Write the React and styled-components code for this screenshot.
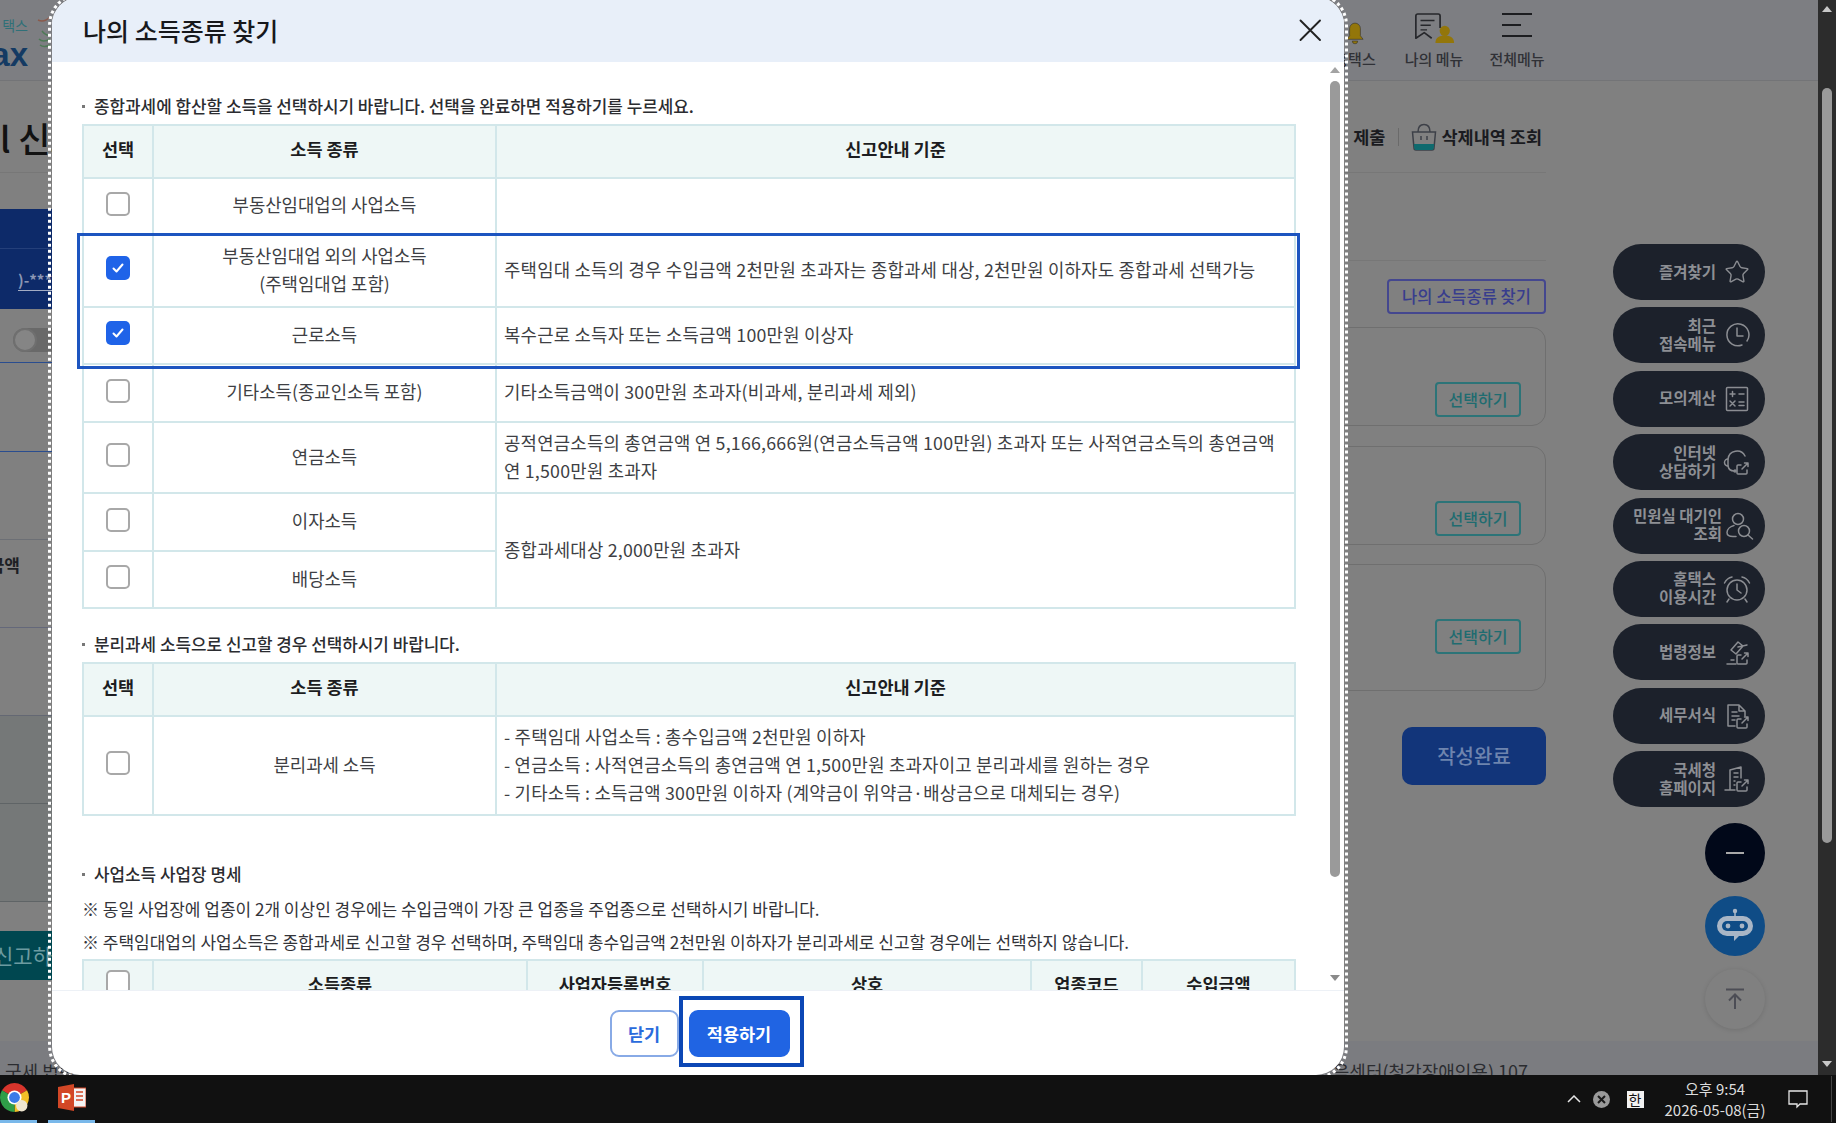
import React from 'react';
import styled, { createGlobalStyle } from 'styled-components';
import { Star } from 'lucide-react';

const GlobalStyle = createGlobalStyle`
	html, body {
		margin: 0;
		padding: 0;
		height: 100%;
		overflow: hidden;
		font-family: "Noto Sans CJK KR", "Noto Sans", sans-serif;
	}
	* {
		box-sizing: border-box;
	}
`;

const Screen = styled.div`
	width: 1836px;
	height: 1123px;
	display: flex;
	flex-direction: column;
	overflow: hidden;
`;

const Desktop = styled.div`
	height: 1075px;
	display: flex;
`;

const Page = styled.div`
	position: relative;
	flex: 1;
	display: flex;
	flex-direction: column;
	background: #808080;
	overflow: hidden;
`;

/* header behind the dimmed layer */
const TopBar = styled.header`
	height: 81px;
	flex: none;
	display: flex;
	justify-content: space-between;
	background: #7d7e82;
	border-bottom: 1px solid #737477;
	padding-right: 260px;
`;

const Brand = styled.div`
	display: flex;
	gap: 9px;
	padding-top: 15px;
`;

const BrandText = styled.div`
	width: 28px;
	display: flex;
	flex-direction: column;
	align-items: flex-end;
	overflow: hidden;
`;

const BrandSmall = styled.span`
	font-size: 14px;
	line-height: 20px;
	color: #2f7078;
`;

const BrandLarge = styled.span`
	margin-top: 5px;
	font-size: 33px;
	line-height: 30px;
	font-weight: 900;
	color: #143a63;
	font-family: "Liberation Sans", sans-serif;
`;

const TopNav = styled.nav`
	display: flex;
`;

const NavItem = styled.div`
	width: ${props => props.$w}px;
	display: flex;
	flex-direction: column;
	align-items: center;
	color: #2e2f33;
`;

const NavIcon = styled.div`
	height: 49px;
	display: flex;
	align-items: flex-start;
	padding-top: ${props => props.$top}px;
`;

const NavLabel = styled.span`
	font-size: 15px;
	line-height: 20px;
	font-weight: 500;
	white-space: nowrap;
	color: #303136;
`;

const PageBody = styled.div`
	flex: 1;
	display: grid;
	grid-template-columns: 52px 1291px 203px 67px 152px 53px;
	min-height: 0;
`;

const LeftSlice = styled.div`
	grid-column: 1;
	display: flex;
	flex-direction: column;
	overflow: hidden;
`;

const PageTitle = styled.div`
	height: 92px;
	flex: none;
	border-bottom: 1px solid #777;
	font-size: 35px;
	line-height: 44px;
	padding-top: 35px;
	white-space: nowrap;
	color: #121212;
	font-weight: 500;
`;

const NavyBand = styled.div`
	margin-top: 36px;
	height: 100px;
	flex: none;
	background: #0d2a69;
`;

const NavyHead = styled.div`
	height: 40px;
	border-bottom: 1px solid #243f7a;
`;

const MaskedNumber = styled.div`
	margin: 20px 0 0 18px;
	font-size: 15px;
	line-height: 21px;
	font-weight: 700;
	white-space: nowrap;
	color: #8c97b4;
	border-bottom: 1px solid #a4adc4;
`;

const ListRow = styled.div`
	height: ${props => props.$h}px;
	flex: none;
	border-bottom: 1px solid ${props => props.$line};
	background: ${props => props.$bg || 'transparent'};
	padding: ${props => props.$pad || '0'};
`;

const Toggle = styled.div`
	width: 60px;
	height: 24px;
	margin-left: 13px;
	border-radius: 12px;
	background: #696969;
`;

const ToggleKnob = styled.div`
	width: 24px;
	height: 24px;
	border-radius: 50%;
	background: #858585;
	border: 2px solid #6f6f6f;
`;

const RowLabel = styled.div`
	font-size: 17px;
	line-height: 24px;
	font-weight: 700;
	color: #1d1f24;
	width: 20px;
	overflow: hidden;
	direction: rtl;
	white-space: nowrap;
`;

const TealBand = styled.div`
	margin-top: 29px;
	height: 49px;
	flex: none;
	background: #004750;
	display: flex;
	justify-content: flex-end;
	font-size: 21px;
	line-height: 49px;
	color: #6c9ba0;
	white-space: nowrap;
	overflow: hidden;
`;

const RightSlice = styled.div`
	grid-column: 3;
	display: flex;
	flex-direction: column;
	align-items: flex-end;
`;

const ActionBar = styled.div`
	width: 100%;
	height: 92px;
	flex: none;
	display: flex;
	justify-content: flex-end;
	align-items: flex-end;
	padding-bottom: 21px;
	border-bottom: 1px solid #777;
`;

const ActionText = styled.span`
	font-size: 17.5px;
	line-height: 28px;
	font-weight: 700;
	color: #1a1b20;
	white-space: nowrap;
	margin-right: ${props => props.$mr || 0}px;
`;

const ActionDivider = styled.span`
	width: 1px;
	height: 18px;
	margin: 0 12px 5px 13px;
	background: #6a6a6a;
`;

const SectionLine = styled.div`
	width: 100%;
	margin-top: 87px;
	border-top: 1px solid #777;
`;

const FindButton = styled.div`
	width: 159px;
	height: 35px;
	margin-top: 18px;
	border: 2px solid #44478f;
	border-radius: 4px;
	font-size: 16.5px;
	line-height: 31px;
	font-weight: 500;
	text-align: center;
	color: #383d8d;
`;

const ChoiceCard = styled.div`
	width: 260px;
	height: ${props => props.$h}px;
	margin-top: ${props => props.$mt}px;
	flex: none;
	display: flex;
	justify-content: flex-end;
	align-items: flex-end;
	padding: 0 24px ${props => props.$pb}px 0;
	border: 1px solid #6f6f6f;
	border-radius: 14px;
`;

const ChoiceButton = styled.div`
	width: 86px;
	height: 35px;
	border: 2px solid #2c7478;
	border-radius: 4px;
	font-size: 16px;
	line-height: 31px;
	font-weight: 500;
	text-align: center;
	color: #1f6c70;
`;

const DoneButton = styled.div`
	width: 144px;
	height: 58px;
	margin-top: 36px;
	border-radius: 10px;
	background: #12357a;
	font-size: 20px;
	line-height: 58px;
	font-weight: 500;
	text-align: center;
	color: #6e84ae;
`;

const Rail = styled.aside`
	grid-column: 5;
	padding-top: 163px;
	display: flex;
	flex-direction: column;
	align-items: flex-end;
`;

const Pill = styled.div`
	width: 152px;
	height: 56px;
	flex: none;
	margin-bottom: 7.4px;
	display: flex;
	justify-content: flex-end;
	align-items: center;
	gap: 7px;
	padding-right: 14px;
	border-radius: 28px;
	background: #1c212b;
	color: #8b8d92;
`;

const PillText = styled.span`
	padding-bottom: 3px;
	font-size: 15.5px;
	line-height: 18px;
	font-weight: 700;
	text-align: right;
	white-space: pre-line;
	color: #8d8f94;
`;

const PillIcon = styled.span`
	width: ${props => props.$w || 28}px;
	height: 28px;
	flex: none;
	display: flex;
	align-items: center;
	justify-content: center;

	svg {
		flex: none;
	}
`;

const RoundButton = styled.div`
	width: 60px;
	height: 60px;
	flex: none;
	margin-top: ${props => props.$mt}px;
	border-radius: 50%;
	display: flex;
	align-items: center;
	justify-content: center;
	background: ${props => props.$bg};
	box-shadow: ${props => props.$ring ? '0 1px 5px rgba(0, 0, 0, 0.12)' : 'none'};
`;

const PageFooter = styled.footer`
	height: 34px;
	flex: none;
	display: flex;
	justify-content: space-between;
	padding: 17px 290px 0 5px;
	background: #7b7c80;
	font-size: 18px;
	line-height: 26px;
	color: #2b2c30;
	white-space: nowrap;
`;

/* the dialog */
const DottedFrame = styled.div`
	position: absolute;
	left: 48px;
	top: -7px;
	width: 1300px;
	height: 1086px;
	padding: 1px;
	border: 3px dotted #fff;
	border-radius: 32px;
`;

const Dialog = styled.div`
	height: 100%;
	display: flex;
	flex-direction: column;
	border-radius: 28px;
	background: #fff;
	overflow: hidden;
`;

const DialogHeader = styled.div`
	height: 65px;
	flex: none;
	display: flex;
	justify-content: space-between;
	align-items: center;
	padding: 0 22px 0 31px;
	background: #e8eff9;
`;

const DialogTitle = styled.h2`
	margin: 0;
	font-size: 25px;
	line-height: 34px;
	font-weight: 500;
	color: #17181c;
`;

const DialogBody = styled.div`
	position: relative;
	height: 928px;
	flex: none;
	padding: 32px 48px 0 30px;
	overflow: hidden;
`;

const SectionTitle = styled.div`
	margin: ${props => props.$mt || 0}px 0 6px;
	display: flex;
	align-items: center;
	gap: 9px;
	font-size: 16.9px;
	line-height: 24px;
	font-weight: 500;
	color: #2b2c30;

	&::before {
		content: '';
		width: 3px;
		height: 3px;
		background: #777;
	}
`;

const Note = styled.div`
	font-size: 17px;
	line-height: 33px;
	color: #33343a;
	white-space: nowrap;
`;

const TableWrap = styled.div`
	position: relative;
	width: 1212px;
	margin-top: ${props => props.$mt || 0}px;
`;

const Table = styled.table`
	width: 1212px;
	table-layout: fixed;
	border-collapse: collapse;
`;

const Col = styled.col`
	width: ${props => props.$w}px;
`;

const Tr = styled.tr`
	height: ${props => props.$h}px;
`;

const Th = styled.th`
	border: 2px solid #d2e7ea;
	background: #eef7f6;
	font-size: 17.5px;
	line-height: 24px;
	font-weight: 700;
	color: #1c1d21;
	padding: 0 0 5px;
`;

const Td = styled.td`
	border: 2px solid #d2e7ea;
	padding: 0 7px 4px;
	font-size: 17.8px;
	line-height: 28px;
	font-weight: 400;
	color: #3e3f44;
	text-align: ${props => props.$left ? 'left' : 'center'};
	letter-spacing: ${props => props.$left ? '0.22px' : '0'};
	white-space: nowrap;
`;

const Check = styled.span`
	display: inline-flex;
	vertical-align: middle;
	width: 24px;
	height: 24px;
	margin-bottom: 4px;
	align-items: center;
	justify-content: center;
	border-radius: 5px;
	border: ${props => props.$on ? 'none' : '2px solid #a8a8a8'};
	background: ${props => props.$on ? '#1f63e8' : '#fff'};
`;

const Highlight = styled.div`
	position: absolute;
	left: -5px;
	right: -6px;
	top: 109px;
	height: 136px;
	border: 3px solid #1d55c0;
	pointer-events: none;
`;

const ScrollTrack = styled.div`
	position: absolute;
	top: 5px;
	right: 4px;
	width: 10px;
	height: 914px;
	display: flex;
	flex-direction: column;
	align-items: center;
`;

const ScrollThumb = styled.div`
	width: 10px;
	height: 796px;
	margin-top: 8px;
	border-radius: 5px;
	background: #9a9a9a;
`;

const ArrowUp = styled.div`
	width: 0;
	height: 0;
	border-left: 5px solid transparent;
	border-right: 5px solid transparent;
	border-bottom: 6px solid ${props => props.$color};
`;

const ArrowDown = styled.div`
	width: 0;
	height: 0;
	margin-top: auto;
	border-left: 5px solid transparent;
	border-right: 5px solid transparent;
	border-top: 6px solid ${props => props.$color};
`;

const DialogFooter = styled.div`
	flex: 1;
	display: flex;
	justify-content: center;
	gap: 10px;
	padding: 19px 0 0 3px;
	border-top: 1px solid #edf1f6;
`;

const FooterButton = styled.button`
	position: relative;
	width: ${props => props.$w}px;
	height: 47px;
	padding: 0;
	border-radius: 9px;
	border: 2px solid ${props => props.$primary ? '#2064e3' : '#88aae6'};
	background: ${props => props.$primary ? '#2064e3' : '#fff'};
	color: ${props => props.$primary ? '#fff' : '#2a6bdc'};
	font-family: inherit;
	font-size: 17.5px;
	font-weight: 600;

	${props => props.$primary && `
		&::after {
			content: '';
			position: absolute;
			left: -12px;
			right: -16px;
			top: -16px;
			bottom: -12px;
			border: 4px solid #0c47b5;
		}
	`}
`;

const BrowserBar = styled.div`
	width: 18px;
	flex: none;
	display: flex;
	flex-direction: column;
	align-items: center;
	padding: 6px 0 8px;
	background: #2c2c2c;
`;

const BrowserThumb = styled.div`
	width: 10px;
	height: 755px;
	margin-top: 76px;
	border-radius: 5px;
	background: #9a9a9a;
`;

/* windows taskbar */
const Taskbar = styled.div`
	height: 48px;
	flex: none;
	display: flex;
	justify-content: space-between;
	background: #111;
`;

const TaskApps = styled.div`
	display: flex;
	gap: 11px;
`;

const TaskApp = styled.div`
	position: relative;
	width: ${props => props.$w}px;
	display: flex;
	align-items: center;
	justify-content: ${props => props.$start ? 'flex-start' : 'center'};
	padding-bottom: 4px;

	&::after {
		content: '';
		position: absolute;
		left: 0;
		right: 0;
		bottom: 0;
		height: 3px;
		background: #79b8ea;
	}
`;

const Tray = styled.div`
	display: flex;
	align-items: center;
	color: #e6e6e6;
`;

const TraySlot = styled.div`
	width: ${props => props.$w}px;
	display: flex;
	justify-content: center;
`;

const ImeBox = styled.span`
	width: 17px;
	height: 17px;
	background: #f2f2f2;
	color: #111;
	font-size: 14px;
	line-height: 17px;
	text-align: center;
`;

const Clock = styled.div`
	font-size: 15px;
	line-height: 21px;
	text-align: center;
	white-space: nowrap;
	color: #ddd;
`;

const TrayEdge = styled.div`
	width: 1px;
	height: 46px;
	margin: 0 4px 0 11px;
	background: #444;
`;

const upperRows = [
	{ h: 56, label: '부동산임대업의 사업소득', desc: [''] },
	{ h: 73, label: '부동산임대업 외의 사업소득\n(주택임대업 포함)', on: true, desc: ['주택임대 소득의 경우 수입금액 2천만원 초과자는 종합과세 대상, 2천만원 이하자도 종합과세 선택가능'] },
	{ h: 57, label: '근로소득', on: true, desc: ['복수근로 소득자 또는 소득금액 100만원 이상자'] },
	{ h: 58, label: '기타소득(종교인소득 포함)', desc: ['기타소득금액이 300만원 초과자(비과세, 분리과세 제외)'] },
	{ h: 71, label: '연금소득', desc: ['공적연금소득의 총연금액 연 5,166,666원(연금소득금액 100만원) 초과자 또는 사적연금소득의 총연금액', '연 1,500만원 초과자'] },
	{ h: 58, label: '이자소득', span: 2, desc: ['종합과세대상 2,000만원 초과자'] },
	{ h: 57, label: '배당소득' },
];

const separateLines = [
	'- 주택임대 사업소득 : 총수입금액 2천만원 이하자',
	'- 연금소득 : 사적연금소득의 총연금액 연 1,500만원 초과자이고 분리과세를 원하는 경우',
	'- 기타소득 : 소득금액 300만원 이하자 (계약금이 위약금·배상금으로 대체되는 경우)',
];

const StrokeIcon = ({ children, size = 28 }) => (
	<svg width={size} height={size} viewBox="0 0 28 28" fill="none" stroke="currentColor" strokeWidth="1.5" strokeLinecap="round" strokeLinejoin="round">
		{children}
	</svg>
);

const ExtMark = () => (
	<>
		<path d="M18 17h-3a1 1 0 0 0-1 1v7a1 1 0 0 0 1 1h8a1 1 0 0 0 1-1v-3" />
		<path d="M19 21l6-6M21.5 15H25v3.5" />
	</>
);

const pills = [
	{ text: '즐겨찾기', icon: <Star size={26} strokeWidth={1.3} /> },
	{ text: '최근\n접속메뉴', icon: <StrokeIcon><path d="M19 24a11 11 0 1 1 5-4" /><path d="M14 7v8h6" /></StrokeIcon> },
	{ text: '모의계산', icon: <StrokeIcon><rect x="3.5" y="2.5" width="21" height="23" rx="1" /><path d="M7 9h5M9.5 6.500v5M16 9h5M7 16l5 5M12 16l-5 5M16 17h5M16 20.500h5" /></StrokeIcon> },
	{ text: '인터넷\n상담하기', icon: <StrokeIcon><path d="M5 18V11a9 9 0 0 1 17-3" /><path d="M5 11a3.500 3.500 0 0 0 0 7M5 18q1 5 6 5" /><circle cx="12" cy="23" r="1" /><ExtMark /></StrokeIcon> },
	{ text: '민원실 대기인\n조회', w: 22, icon: <StrokeIcon><circle cx="12" cy="7" r="5.500" /><path d="M8 13.500c-4 1-7 4-7 7 0 3 2 4 6 4h3" /><circle cx="18" cy="19" r="5.500" /><path d="M22 23l4.500 4" /></StrokeIcon> },
	{ text: '홈택스\n이용시간', icon: <StrokeIcon><circle cx="14" cy="15" r="10" /><path d="M14 9v6l4 3M1.500 8Q4 3 9 2M26.500 8Q24 3 19 2M6 24l-2 3M22 24l2 3" /></StrokeIcon> },
	{ text: '법령정보', icon: <StrokeIcon><path d="M8 12l7-8 5 4-7 8zM15 9l9-2M4 26h9M8 22h3" /><ExtMark /></StrokeIcon> },
	{ text: '세무서식', icon: <StrokeIcon><path d="M5 3h11l6 6v5M16 3v6h6M5 3v21h7M9 10h5M9 14h7M9 18h3" /><ExtMark /></StrokeIcon> },
	{ text: '국세청\n홈페이지', icon: <StrokeIcon><path d="M7 25V5l11-3v11M2 25h10M11 8h4M11 12h4M11 16h1M11 20h1" /><ExtMark /></StrokeIcon> },
];

const CheckMark = () => (
	<svg width="14" height="14" viewBox="0 0 14 14" fill="none" stroke="#fff" strokeWidth="2" strokeLinecap="round" strokeLinejoin="round">
		<path d="M2.500 7.500l3 3 6-7" />
	</svg>
);

const CheckBox = ({ on }) => <Check $on={on}>{on && <CheckMark />}</Check>;

const Lines = ({ items }) => items.map((line, i) => (
	<React.Fragment key={i}>
		{i > 0 && <br />}
		{line}
	</React.Fragment>
));

const TableHead = () => (
	<thead>
		<Tr $h={53}>
			<Th>선택</Th>
			<Th>소득 종류</Th>
			<Th>신고안내 기준</Th>
		</Tr>
	</thead>
);

const TableCols = () => (
	<colgroup>
		<Col $w={70} />
		<Col $w={343} />
		<Col $w={799} />
	</colgroup>
);

function IncomeDialog() {
	return (
		<DottedFrame>
			<Dialog>
				<DialogHeader>
					<DialogTitle>나의 소득종류 찾기</DialogTitle>
					<svg width="24" height="24" viewBox="0 0 24 24" stroke="#222" strokeWidth="1.9" strokeLinecap="round">
						<path d="M2.500 2.500l19.500 19.500M22 2.500L2.500 22" />
					</svg>
				</DialogHeader>
				<DialogBody>
					<SectionTitle>종합과세에 합산할 소득을 선택하시기 바랍니다. 선택을 완료하면 적용하기를 누르세요.</SectionTitle>
					<TableWrap>
						<Table>
							<TableCols />
							<TableHead />
							<tbody>
								{upperRows.map(row => (
									<Tr $h={row.h} key={row.label}>
										<Td><CheckBox on={row.on} /></Td>
										<Td><Lines items={row.label.split('\n')} /></Td>
										{row.desc && <Td $left rowSpan={row.span}><Lines items={row.desc} /></Td>}
									</Tr>
								))}
							</tbody>
						</Table>
						<Highlight />
					</TableWrap>

					<SectionTitle $mt={23}>분리과세 소득으로 신고할 경우 선택하시기 바랍니다.</SectionTitle>
					<Table>
						<TableCols />
						<TableHead />
						<tbody>
							<Tr $h={99}>
								<Td><CheckBox /></Td>
								<Td>분리과세 소득</Td>
								<Td $left><Lines items={separateLines} /></Td>
							</Tr>
						</tbody>
					</Table>

					<SectionTitle $mt={46}>사업소득 사업장 명세</SectionTitle>
					<Note>※ 동일 사업장에 업종이 2개 이상인 경우에는 수입금액이 가장 큰 업종을 주업종으로 선택하시기 바랍니다.</Note>
					<Note>※ 주택임대업의 사업소득은 종합과세로 신고할 경우 선택하며, 주택임대 총수입금액 2천만원 이하자가 분리과세로 신고할 경우에는 선택하지 않습니다.</Note>
					<TableWrap $mt={1}>
						<Table>
							<colgroup>
								<Col $w={70} />
								<Col $w={374} />
								<Col $w={176} />
								<Col $w={328} />
								<Col $w={111} />
								<Col $w={153} />
							</colgroup>
							<thead>
								<Tr $h={53}>
									<Th><CheckBox /></Th>
									<Th>소득종류</Th>
									<Th>사업자등록번호</Th>
									<Th>상호</Th>
									<Th>업종코드</Th>
									<Th>수입금액</Th>
								</Tr>
							</thead>
						</Table>
					</TableWrap>

					<ScrollTrack>
						<ArrowUp $color="#a3a3a3" />
						<ScrollThumb />
						<ArrowDown $color="#8a8a8a" />
					</ScrollTrack>
				</DialogBody>
				<DialogFooter>
					<FooterButton $w={69}>닫기</FooterButton>
					<FooterButton $w={101} $primary>적용하기</FooterButton>
				</DialogFooter>
			</Dialog>
		</DottedFrame>
	);
}

export default function App() {
	return (
		<Screen>
			<GlobalStyle />
			<Desktop>
				<Page>
					<TopBar>
						<Brand>
							<BrandText>
								<BrandSmall>택스</BrandSmall>
								<BrandLarge>ax</BrandLarge>
							</BrandText>
							<svg width="14" height="42" viewBox="0 0 14 42" fill="none" strokeWidth="1.500">
								<path d="M1 5q6 3 12-3" stroke="#8a5a4c" />
								<path d="M2 24q4 4 11 0M3 30q4 3 10 0M5 16q4 5 8 4" stroke="#4d7a55" />
							</svg>
						</Brand>
						<TopNav>
							<NavItem $w={74}>
								<NavIcon $top={21}>
									<svg width="18" height="24" viewBox="0 0 20 26" fill="#93760a" stroke="#2a2a2a" strokeWidth="0.6">
										<path d="M10 2a6 6 0 0 1 6 6v8l3 4H1l3-4V8a6 6 0 0 1 6-6z" />
										<path d="M7 22a3 3 0 0 0 6 0z" />
									</svg>
								</NavIcon>
								<NavLabel>홈택스</NavLabel>
							</NavItem>
							<NavItem $w={84}>
								<NavIcon $top={12}>
									<svg width="41" height="32" viewBox="0 0 44 34" fill="none" stroke="#26272b" strokeWidth="1.8" strokeLinejoin="round">
										<path d="M2 4a2 2 0 0 1 2-2h22a2 2 0 0 1 2 2v13M2 4v24l9-6 8 6" />
										<path d="M7 9h15M7 14h11M7 19h7" strokeWidth="1.500" />
										<circle cx="33" cy="20" r="5.500" fill="#93760a" stroke="none" />
										<path d="M23 33c0-6 4-8 10-8s10 2 10 8z" fill="#93760a" stroke="none" />
									</svg>
								</NavIcon>
								<NavLabel>나의 메뉴</NavLabel>
							</NavItem>
							<NavItem $w={82}>
								<NavIcon $top={13}>
									<svg width="30" height="24" viewBox="0 0 30 24" stroke="#1c1d20" strokeWidth="2">
										<path d="M0 1h30M0 12h19M0 23h30" />
									</svg>
								</NavIcon>
								<NavLabel>전체메뉴</NavLabel>
							</NavItem>
						</TopNav>
					</TopBar>

					<PageBody>
						<LeftSlice>
							<PageTitle>l 신고</PageTitle>
							<NavyBand>
								<NavyHead />
								<MaskedNumber>)-***</MaskedNumber>
							</NavyBand>
							<ListRow $h={54} $line="#2a4d8f" $pad="19px 0 0"><Toggle><ToggleKnob /></Toggle></ListRow>
							<ListRow $h={89} $line="#2a4d8f" />
							<ListRow $h={88} $line="#6c6f75" />
							<ListRow $h={88} $line="#64687a" $pad="13px 0 0"><RowLabel>금액</RowLabel></ListRow>
							<ListRow $h={88} $line="#646873" />
							<ListRow $h={88} $line="#5f6466" $bg="#757878" />
							<ListRow $h={98} $line="#5f6466" $bg="#757878" />
							<TealBand>신고하</TealBand>
						</LeftSlice>

						<RightSlice>
							<ActionBar>
								<ActionText>제출</ActionText>
								<ActionDivider />
								<svg width="26" height="28" viewBox="0 0 26 28" fill="none" stroke="#3d4048" strokeWidth="1.500">
									<path d="M1.500 9h23l-1.500 16a2 2 0 0 1-2 2H5a2 2 0 0 1-2-2z" />
									<path d="M2.800 21h20.400l-.5 4.500a2 2 0 0 1-2 1.500H5.300a2 2 0 0 1-2-1.500z" fill="#0f6a6e" stroke="none" />
									<path d="M7 9c0-5 2-7.500 6-7.500s6 2.500 6 7.500M10 13v4M16 13v4" />
								</svg>
								<ActionText $mr={4}>&nbsp;삭제내역 조회</ActionText>
							</ActionBar>
							<SectionLine />
							<FindButton>나의 소득종류 찾기</FindButton>
							<ChoiceCard $h={99} $mt={13} $pb={8}><ChoiceButton>선택하기</ChoiceButton></ChoiceCard>
							<ChoiceCard $h={99} $mt={20} $pb={8}><ChoiceButton>선택하기</ChoiceButton></ChoiceCard>
							<ChoiceCard $h={127} $mt={19} $pb={36}><ChoiceButton>선택하기</ChoiceButton></ChoiceCard>
							<DoneButton>작성완료</DoneButton>
						</RightSlice>

						<Rail>
							{pills.map(pill => (
								<Pill key={pill.text}>
									<PillText>{pill.text}</PillText>
									<PillIcon $w={pill.w}>{pill.icon}</PillIcon>
								</Pill>
							))}
							<RoundButton $mt={8} $bg="#010819">
								<svg width="18" height="4" viewBox="0 0 18 4"><path d="M0 2h18" stroke="#a9a9a9" strokeWidth="2" /></svg>
							</RoundButton>
							<RoundButton $mt={13} $bg="#0f4c86">
								<svg width="38" height="36" viewBox="0 0 38 36">
									<circle cx="19" cy="3" r="2.200" fill="#a9b6c6" />
									<path d="M19 3v6" stroke="#a9b6c6" strokeWidth="1.500" />
									<path d="M11 8h16a10 10 0 0 1 0 20h-4l-5 5v-5h-7a10 10 0 0 1 0-20z" fill="#a9b6c6" />
									<rect x="6" y="13" width="26" height="10" rx="5" fill="#0f4c86" />
									<circle cx="12" cy="18" r="2.400" fill="#a9b6c6" />
									<circle cx="26" cy="18" r="2.400" fill="#a9b6c6" />
								</svg>
							</RoundButton>
							<RoundButton $mt={13} $bg="#808080" $ring>
								<svg width="20" height="22" viewBox="0 0 20 22" fill="none" stroke="#4c4d55" strokeWidth="2">
									<path d="M1 1.500h18M10 21V7M4 12.500L10 6.500l6 6" />
								</svg>
							</RoundButton>
						</Rail>
					</PageBody>

					<PageFooter>
						<span>국세 법령</span>
						<span>음센터(청각장애인용) 107</span>
					</PageFooter>

					<IncomeDialog />
				</Page>

				<BrowserBar>
					<ArrowUp $color="#c8c8c8" />
					<BrowserThumb />
					<ArrowDown $color="#c8c8c8" />
				</BrowserBar>
			</Desktop>

			<Taskbar>
				<TaskApps>
					<TaskApp $w={37} $start>
						<svg width="29" height="29" viewBox="0 0 28 28">
							<path d="M1.900 7A14 14 0 0 1 26.100 7L14 14Z" fill="#d8352c" />
							<path d="M26.100 7A14 14 0 0 1 14 28L14 14Z" fill="#f3bf27" />
							<path d="M14 28A14 14 0 0 1 1.900 7L14 14Z" fill="#2f9e48" />
							<circle cx="14" cy="14" r="6.800" fill="#fff" />
							<circle cx="14" cy="14" r="5.200" fill="#3b7be8" />
							<circle cx="21" cy="22" r="5.500" fill="#efe6cf" />
						</svg>
					</TaskApp>
					<TaskApp $w={47}>
						<svg width="28" height="27" viewBox="0 0 28 27">
							<rect x="13" y="4" width="15" height="19" fill="#f3f3f3" stroke="#d24726" />
							<path d="M18 8h7M18 12h7M18 16h7" stroke="#d24726" strokeWidth="1.500" />
							<path d="M0 3L16 0V27L0 24Z" fill="#d24726" />
							<text x="3" y="19" fill="#fff" fontSize="15" fontWeight="700" fontFamily="Liberation Sans, sans-serif">P</text>
						</svg>
					</TaskApp>
				</TaskApps>
				<Tray>
					<TraySlot $w={27}>
						<svg width="14" height="8" viewBox="0 0 14 8" fill="none" stroke="#e6e6e6" strokeWidth="1.500"><path d="M1 7l6-6 6 6" /></svg>
					</TraySlot>
					<TraySlot $w={28}>
						<svg width="17" height="17" viewBox="0 0 17 17">
							<circle cx="8.500" cy="8.500" r="8.500" fill="#9a9a9a" />
							<path d="M5 5l7 7M12 5l-7 7" stroke="#1a1a1a" strokeWidth="2" />
						</svg>
					</TraySlot>
					<TraySlot $w={40}><ImeBox>한</ImeBox></TraySlot>
					<TraySlot $w={120}>
						<Clock>오후 9:54<br />2026-05-08(금)</Clock>
					</TraySlot>
					<TraySlot $w={45}>
						<svg width="20" height="20" viewBox="0 0 20 20" fill="none" stroke="#e6e6e6" strokeWidth="1.300"><path d="M1 2h18v13h-7l-3 3v-3H1z" /></svg>
					</TraySlot>
					<TrayEdge />
				</Tray>
			</Taskbar>
		</Screen>
	);
}
